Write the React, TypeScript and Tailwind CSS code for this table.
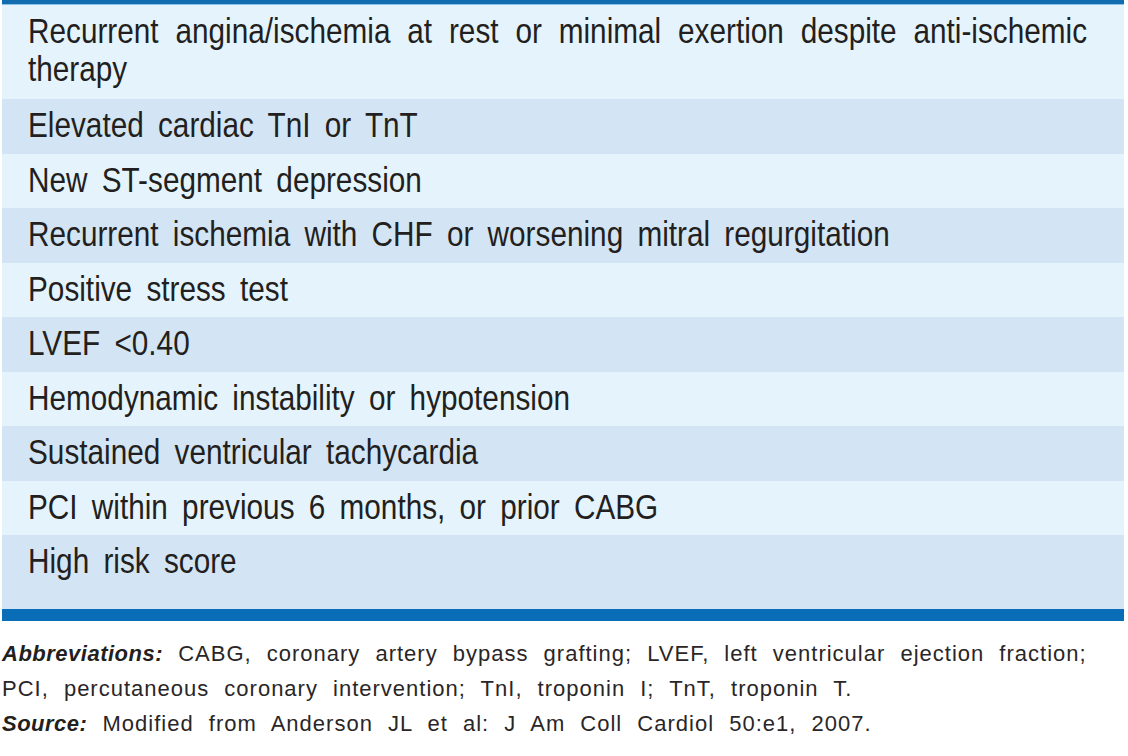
const rows = [
  'Recurrent angina/ischemia at rest or minimal exertion despite anti-ischemic therapy',
  'Elevated cardiac TnI or TnT',
  'New ST-segment depression',
  'Recurrent ischemia with CHF or worsening mitral regurgitation',
  'Positive stress test',
  'LVEF <0.40',
  'Hemodynamic instability or hypotension',
  'Sustained ventricular tachycardia',
  'PCI within previous 6 months, or prior CABG',
  'High risk score',
];

export default function App() {
  return (
    <div className="min-h-screen w-full overflow-hidden bg-white text-[#231f20] font-['Liberation_Sans',Arial,sans-serif]">
      <div className="ml-[2px] mr-[4px]">
        <div className="h-[4px] bg-[#116cb0]" />
        <div className="h-[1px] bg-[#8cc0e4]" />
        {rows.map((text, i) => (
          <div
            key={i}
            className={
              'overflow-hidden pl-[26px] pt-[7px] ' +
              (i % 2 === 0 ? 'bg-[#e5f4fc] ' : 'bg-[#d3e5f4] ') +
              (i === 0 ? 'pb-[11px]' : i === rows.length - 1 ? 'pb-[29px]' : 'pb-[9.5px]')
            }
          >
            {/* condensed face: Arial squeezed sideways */}
            <div className="w-[1246px] origin-left scale-x-[0.85] text-justify text-[35px] leading-[38px] [word-spacing:7px]">
              {text}
            </div>
          </div>
        ))}
        <div className="h-[12px] bg-[#0a6db8]" />
      </div>
      <div className="mt-[15px] pl-[2px] text-[22px] leading-[35px] tracking-[1px] [word-spacing:8px] text-[#2a2627]">
        <p>
          <span className="font-bold italic tracking-[0.5px] text-[#231f20]">Abbreviations:</span> CABG, coronary artery bypass grafting; LVEF, left ventricular ejection fraction;
          <br />
          PCI, percutaneous coronary intervention; TnI, troponin I; TnT, troponin T.
        </p>
        <p>
          <span className="font-bold italic tracking-[0.5px] text-[#231f20]">Source:</span> Modified from Anderson JL et al: J Am Coll Cardiol 50:e1, 2007.
        </p>
      </div>
    </div>
  );
}
